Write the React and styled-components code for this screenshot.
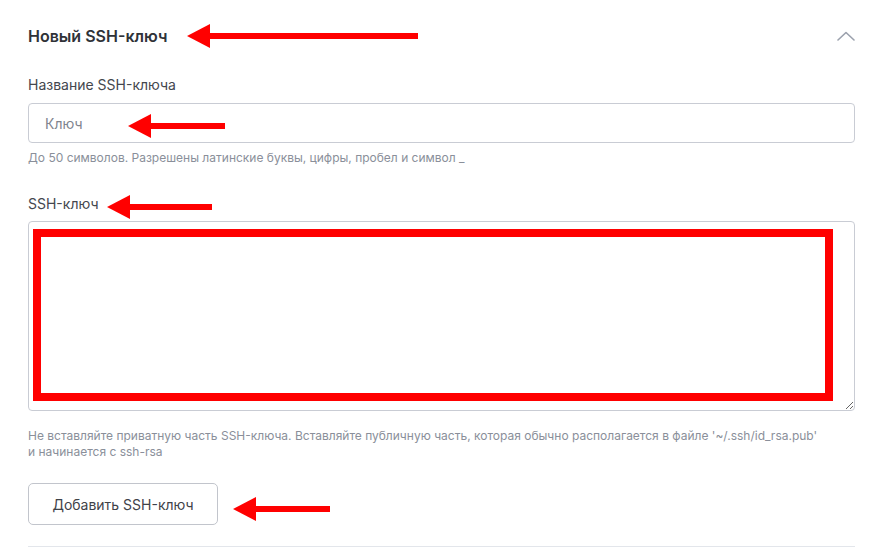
import React from "react";
import styled, { createGlobalStyle } from "styled-components";

const GlobalStyle = createGlobalStyle`
  html, body {
    margin: 0;
    padding: 0;
    background: #ffffff;
  }
  body {
    font-family: Inter, "Noto Sans", "Liberation Sans", sans-serif;
    color: #33363d;
  }
`

const Page = styled.div`
  position: relative;
  width: 881px;
  height: 550px;
  overflow: hidden;
  box-sizing: border-box;
  padding: 24px 26px 0 28px;
`

const Header = styled.div`
  display: flex;
  align-items: center;
  justify-content: space-between;
  height: 24px;

  & > .title {
    font-size: 16px;
    font-weight: 600;
    line-height: 24px;
    color: #2f3238;
  }
`

const Chevron = styled.button`
  display: flex;
  align-items: center;
  justify-content: center;
  width: 22px;
  height: 22px;
  padding: 0;
  margin-right: -2px;
  border: none;
  background: none;
  color: #9ba1ad;
`

const Field = styled.div`
  margin-top: ${p => p.$top}px;
  display: flex;
  flex-direction: column;
`

const Label = styled.label`
  font-size: 14px;
  line-height: 20px;
  color: #44474e;
  margin-bottom: ${p => p.$gap}px;
`

const Input = styled.input`
  box-sizing: border-box;
  height: 40px;
  width: 100%;
  border: 1px solid #c9ccd4;
  border-radius: 4px;
  padding: 0 16px;
  font-family: inherit;
  font-size: 14px;
  color: #33363d;
  outline: none;

  &::placeholder {
    color: #80848e;
  }
`

const TextArea = styled.textarea`
  box-sizing: border-box;
  display: block;
  height: 190px;
  width: 100%;
  border: 1px solid #c9ccd4;
  border-radius: 4px;
  padding: 10px 16px;
  font-family: inherit;
  font-size: 14px;
  outline: none;
  resize: vertical;
`

const Hint = styled.div`
  margin-top: ${p => p.$top}px;
  font-size: 12px;
  line-height: 16px;
  color: #8a8f9a;
`

const Button = styled.button`
  margin-top: 23px;
  box-sizing: border-box;
  height: 42px;
  width: 190px;
  border: 1px solid #c2c5cc;
  border-radius: 5px;
  background: #fff;
  font-family: inherit;
  font-size: 14px;
  color: #3f4249;
  cursor: pointer;
`

const Divider = styled.div`
  margin-top: 21px;
  height: 1px;
  background: #e3e6eb;
`

const Arrow = styled.svg`
  position: absolute;
  left: ${p => p.$x}px;
  top: ${p => p.$y - 12}px;
  overflow: visible;
`

const Frame = styled.div`
  position: absolute;
  left: 33px;
  top: 229px;
  width: 800px;
  height: 172px;
  box-sizing: border-box;
  border: 8px solid #ff0000;
  pointer-events: none;
`

function RedArrow({ x, y, length }) {
  return (
    <Arrow $x={x} $y={y} width={length} height="24" viewBox={`0 0 ${length} 24`}>
      <polygon points="0,12 23,0 23,24" fill="#ff0000" />
      <rect x="20" y="9" width={length - 20} height="6" fill="#ff0000" />
    </Arrow>
  )
}

export default function App() {
  return (
    <>
      <GlobalStyle />
      <Page>
        <Header>
          <span className="title">Новый SSH-ключ</span>
          <Chevron aria-label="Свернуть">
            <svg width="18" height="10" viewBox="0 0 18 10" fill="none">
              <path d="M1 9 L9 1.5 L17 9" stroke="currentColor" strokeWidth="1.6" strokeLinecap="round" strokeLinejoin="round" />
            </svg>
          </Chevron>
        </Header>

        <Field $top={27}>
          <Label $gap={8}>Название SSH-ключа</Label>
          <Input placeholder="Ключ" />
        </Field>
        <Hint $top={7}>До 50 символов. Разрешены латинские буквы, цифры, пробел и символ _</Hint>

        <Field $top={28}>
          <Label $gap={7}>SSH-ключ</Label>
          <TextArea />
        </Field>
        <Hint $top={17}>
          Не вставляйте приватную часть SSH-ключа. Вставляйте публичную часть, которая обычно располагается в файле '~/.ssh/id_rsa.pub'
          <br />
          и начинается с ssh-rsa
        </Hint>

        <Button>Добавить SSH-ключ</Button>
        <Divider />

        <RedArrow x={187} y={36} length={231} />
        <RedArrow x={128} y={126} length={97} />
        <RedArrow x={107} y={207} length={105} />
        <RedArrow x={233} y={509} length={97} />
        <Frame />
      </Page>
    </>
  )
}
